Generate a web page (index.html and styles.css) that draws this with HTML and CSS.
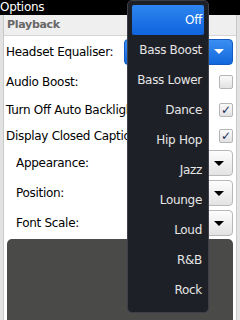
FILE: index.html
```html
<!DOCTYPE html>
<html lang="en">
<head>
  <meta charset="UTF-8">
  <title>Options</title>
  <link rel="stylesheet" href="styles.css">
</head>
<body>
  <div class="titlebar">Options</div>

  <div class="panel">
    <div class="section-header">Playback</div>

    <div class="row row-first">
      <span class="label">Headset Equaliser:</span>
      <div class="choice choice-active">Bass Boost<span class="arrow"></span></div>
    </div>
    <div class="row">
      <span class="label">Audio Boost:</span>
      <span class="checkbox"></span>
    </div>
    <div class="row row-check">
      <span class="label">Turn Off Auto Backlight</span>
      <span class="checkbox checked">&#10003;</span>
    </div>
    <div class="row row-check row-short">
      <span class="label">Display Closed Captions</span>
      <span class="checkbox checked">&#10003;</span>
    </div>
    <div class="row">
      <span class="label indent">Appearance:</span>
      <div class="choice">Default<span class="arrow"></span></div>
    </div>
    <div class="row">
      <span class="label indent">Position:</span>
      <div class="choice">Bottom<span class="arrow"></span></div>
    </div>
    <div class="row">
      <span class="label indent">Font Scale:</span>
      <div class="choice">100%<span class="arrow"></span></div>
    </div>

    <div class="preview"></div>
  </div>

  <!-- equaliser list, open over the form -->
  <ul class="menu">
    <li class="selected">Off</li>
    <li>Bass Boost</li>
    <li>Bass Lower</li>
    <li>Dance</li>
    <li>Hip Hop</li>
    <li>Jazz</li>
    <li>Lounge</li>
    <li>Loud</li>
    <li>R&amp;B</li>
    <li>Rock</li>
  </ul>
</body>
</html>
```

FILE: styles.css
```css
body {
  margin: 0;
  width: 240px;
  height: 320px;
  overflow: hidden;
  position: relative;
  background-color: #e2e2e2;
  font-family: "DejaVu Sans", sans-serif;
  letter-spacing: -0.3px;
  color: #000;
}

.titlebar {
  height: 15px;
  line-height: 14px;
  background-color: #000;
  color: #fff;
  font-size: 12px;
}

.panel {
  margin: 0 3px;
  height: 305px;
  background-color: #fff;
  border-left: 1px solid #c9c9c9;
  border-right: 1px solid #c9c9c9;
  display: flex;
  flex-direction: column;
}

.section-header {
  height: 20px;
  line-height: 20px;
  background-color: #efefef;
  border-bottom: 1px solid #d6d6d6;
  color: #666;
  font-size: 11px;
  font-weight: bold;
  padding-left: 3px;
}

.row {
  height: 30px;
  flex-shrink: 0;
  display: flex;
  align-items: center;
  justify-content: space-between;
  padding: 0 3px 0 2px;
  white-space: nowrap;
  font-size: 12px;
}

.row-first {
  height: 31px;
}

.row-check {
  height: 26px;
}

.row-short {
  height: 25px;
}

.label.indent {
  padding-left: 10px;
}

.choice {
  height: 24px;
  width: 80px;
  border: 1px solid #b8b8b8;
  border-radius: 4px;
  background: linear-gradient(#fdfdfd, #e3e3e3);
  display: flex;
  align-items: center;
  justify-content: flex-end;
  color: #000;
  font-size: 12px;
  padding-right: 8px;
  gap: 8px;
}

.choice-active {
  width: 99px;
  border-color: #1559c4;
  background: linear-gradient(#3b8ff2, #1267dc);
  color: #fff;
}

.arrow {
  width: 0;
  height: 0;
  border-left: 5px solid transparent;
  border-right: 5px solid transparent;
  border-top: 5px solid #000;
}

.choice-active .arrow {
  border-top-color: #fff;
}

.checkbox {
  width: 12px;
  height: 12px;
  border: 1px solid #b5b5b5;
  border-radius: 2px;
  background: linear-gradient(#fafafa, #e2e2e2);
  font-size: 12px;
  line-height: 12px;
  text-align: center;
  color: #1b2b5a;
  font-weight: bold;
}

.preview {
  flex: 1;
  margin: 1px 3px 0;
  background-color: #4a4b48;
  border-radius: 5px 5px 0 0;
}

/* popup list */
.menu {
  position: absolute;
  left: 127px;
  top: 0;
  width: 72px;
  height: 301px;
  margin: 0;
  padding: 4px 4px 6px;
  list-style: none;
  background-color: #1e2027;
  border: 1px solid #3d4048;
  border-radius: 5px;
}

.menu li {
  height: 30px;
  line-height: 30px;
  text-align: right;
  padding-right: 2px;
  color: #e6e6e6;
  font-size: 12px;
}

.menu li.selected {
  background: linear-gradient(#2d86f0, #0f63dc);
  border-radius: 2px;
  color: #fff;
}
```
